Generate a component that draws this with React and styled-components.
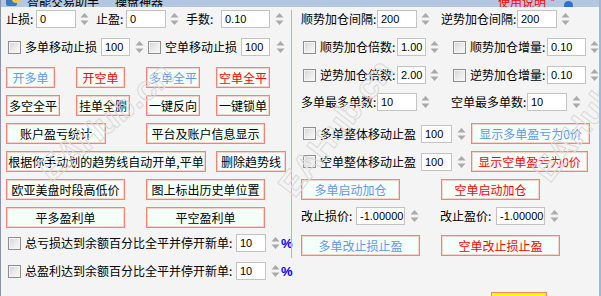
import React from "react";
import styled, { createGlobalStyle } from "styled-components";

const GlobalStyle = createGlobalStyle`
  html, body {
    margin: 0;
    padding: 0;
    background: #f5f5f5;
  }
`;

const tones = {
  blue: "#6495ed",
  red: "#ff0000",
  black: "#000000",
};

const Window = styled.div`
  position: relative;
  width: 601px;
  height: 296px;
  overflow: hidden;
  box-sizing: border-box;
  background: #f4f4f4;
  border-left: 1px solid #8796ab;
  border-right: 2px solid #9fb6de;
  font-family: "Noto Sans CJK SC", "Noto Sans", sans-serif;
  font-size: 12px;
  color: #000;
`;

const TitleBar = styled.div`
  height: 7px;
  background: #b4c7e0;
  display: flex;
  align-items: flex-end;
  overflow: hidden;
  padding-left: 4px;
`;

const TitleText = styled.span`
  font-size: 12px;
  line-height: 10px;
  margin-left: ${(p) => p.$ml || 0}px;
  color: ${(p) => p.$color || "#000"};
  white-space: nowrap;
`;

const Body = styled.div`
  display: flex;
  align-items: flex-start;
`;

const LeftPanel = styled.div`
  width: 290px;
  box-sizing: border-box;
  padding-left: 5px;
  display: flex;
  flex-direction: column;
`;

const Divider = styled.div`
  width: 1px;
  height: 248px;
  margin-top: 3px;
  background: #f0a67c;
`;

const RightPanel = styled.div`
  flex: 1;
  padding-left: 9px;
  display: flex;
  flex-direction: column;
`;

const Row = styled.div`
  display: flex;
  align-items: center;
  height: ${(p) => p.$h || 18}px;
  margin-top: ${(p) => p.$mt || 0}px;
`;

const Cell = styled.div`
  display: flex;
  align-items: center;
  flex-shrink: 0;
  width: ${(p) => p.$w}px;
  box-sizing: border-box;
`;

const Label = styled.span`
  flex-shrink: 0;
  white-space: nowrap;
  line-height: 1;
  width: ${(p) => (p.$w ? `${p.$w}px` : "auto")};
  margin-left: ${(p) => p.$ml || 0}px;
`;

const Field = styled.input`
  flex-shrink: 0;
  width: ${(p) => p.$w}px;
  height: 18px;
  margin: 0 0 0 ${(p) => p.$ml || 0}px;
  padding: 0 0 0 3px;
  box-sizing: border-box;
  border: 1px solid #c3c3c3;
  background: #fff;
  font-family: "Liberation Sans", Arial, sans-serif;
  font-size: 11px;
  color: #000;
  outline: none;
`;

const Check = styled.span`
  flex-shrink: 0;
  width: 13px;
  height: 13px;
  box-sizing: border-box;
  margin-left: ${(p) => p.$ml || 0}px;
  border: 1px solid #8e8f8f;
  background: linear-gradient(135deg, #d4d4d4 0%, #eeeeee 60%, #f8f8f8 100%);
  box-shadow: inset 0 0 0 1px #f4f4f4;
`;

const SpinBox = styled.svg`
  flex-shrink: 0;
  margin-left: ${(p) => p.$ml || 4}px;
`;

const Spin = ({ ml }) => (
  <SpinBox $ml={ml} width="9" height="14" viewBox="0 0 9 14">
    <path d="M4.5 1 L8.5 5.5 L0.5 5.5 Z" fill="#a9a9a9" />
    <path d="M0.5 8.5 L8.5 8.5 L4.5 13 Z" fill="#a9a9a9" />
  </SpinBox>
);

const Button = styled.button`
  flex-shrink: 0;
  width: ${(p) => p.$w}px;
  height: 21px;
  padding: 0;
  margin: 0;
  box-sizing: border-box;
  border: 1px solid #fa8072;
  box-shadow: inset 0 0 0 1px rgba(250, 128, 114, 0.35);
  background: #f5fffa;
  color: ${(p) => tones[p.$tone || "black"]};
  font-family: "Noto Sans CJK SC", sans-serif;
  font-size: 12px;
  white-space: nowrap;
  overflow: hidden;
  grid-column: ${(p) => p.$col || "auto"};
  justify-self: start;
`;

const ButtonGrid = styled.div`
  margin-top: 11px;
  display: grid;
  grid-template-columns: repeat(4, 70px);
  grid-auto-rows: 21px;
  row-gap: 7px;
`;

const Percent = styled.span`
  margin-left: 1px;
  color: #0000ff;
  font-family: "Liberation Sans", Arial, sans-serif;
  font-size: 13px;
  font-weight: bold;
`;

const YellowTab = styled.div`
  margin-top: 36px;
  margin-left: 190px;
  width: 54px;
  height: 10px;
  background: #ffff00;
  border: 1px solid #fa8072;
`;

const Watermark = styled.span`
  position: absolute;
  left: ${(p) => p.$x}px;
  top: ${(p) => p.$y}px;
  transform: rotate(${(p) => p.$r}deg);
  transform-origin: left bottom;
  font-family: "Liberation Sans", Arial, sans-serif;
  font-size: 34px;
  font-weight: bold;
  color: transparent;
  -webkit-text-stroke: 1px #dadada;
  pointer-events: none;
  white-space: nowrap;
`;

const TitleIcon = () => (
  <svg width="16" height="14" viewBox="0 0 16 14" style={{ flexShrink: 0 }}>
    <rect x="1" y="2" width="11" height="11" rx="2" fill="#3b78c8" />
    <circle cx="11" cy="6" r="4" fill="#f3c640" />
  </svg>
);

const InfoDot = styled.span`
  width: 9px;
  height: 9px;
  border-radius: 50%;
  background: #2f6fd6;
  margin-left: 8px;
  margin-bottom: -3px;
`;

const PctRow = ({ mt, text }) => (
  <Row $mt={mt}>
    <Check $ml={2} />
    <Label $ml={4} $w={211}>{text}</Label>
    <Field $w={30} value="10" readOnly />
    <Spin ml={5} />
    <Percent>%</Percent>
  </Row>
);

const CheckField = ({ cell, label, lw, value, fw, fml = 0, sml = 4, first }) => (
  <Cell $w={cell}>
    <Check $ml={first ? 2 : 0} />
    <Label $ml={4} $w={lw}>{label}</Label>
    <Field $w={fw} $ml={fml} value={value} readOnly />
    <Spin ml={sml} />
  </Cell>
);

const LabelField = ({ cell, label, lw, value, fw, sml = 4 }) => (
  <Cell $w={cell}>
    <Label $w={lw}>{label}</Label>
    <Field $w={fw} value={value} readOnly />
    <Spin ml={sml} />
  </Cell>
);

export default function App() {
  return (
    <>
      <GlobalStyle />
      <Window>
        <TitleBar>
          <TitleIcon />
          <TitleText $ml={6}>智能交易助手</TitleText>
          <TitleText $ml={16}>操盘神器</TitleText>
          <TitleText $ml={335} $color="#ff0000">使用说明</TitleText>
          <TitleText $ml={4} $color="#ff0000">*</TitleText>
          <InfoDot />
        </TitleBar>

        <Body>
          <LeftPanel>
            <Row $mt={3}>
              <LabelField cell={90} label="止损:" lw={30} value="0" fw={40} />
              <LabelField cell={90} label="止盈:" lw={30} value="0" fw={40} />
              <LabelField cell={100} label="手数:" lw={35} value="0.10" fw={49} sml={5} />
            </Row>

            <Row $mt={10}>
              <CheckField cell={142} first label="多单移动止损" lw={72} value="100" fw={29} fml={4} sml={5} />
              <CheckField cell={140} label="空单移动止损" lw={72} value="100" fw={29} fml={4} sml={6} />
            </Row>

            <ButtonGrid>
              <Button $w={49} $tone="blue">开多单</Button>
              <Button $w={49} $tone="red">开空单</Button>
              <Button $w={54} $tone="blue">多单全平</Button>
              <Button $w={54} $tone="red">空单全平</Button>

              <Button $w={54}>多空全平</Button>
              <Button $w={54}>挂单全删</Button>
              <Button $w={54}>一键反向</Button>
              <Button $w={54}>一键锁单</Button>

              <Button $w={100} $col="1 / span 2">账户盈亏统计</Button>
              <Button $w={119} $col="3 / span 2">平台及账户信息显示</Button>

              <Button $w={200} $col="1 / span 3">根据你手动划的趋势线自动开单,平单</Button>
              <Button $w={70} $col="4">删除趋势线</Button>

              <Button $w={119} $col="1 / span 2">欧亚美盘时段高低价</Button>
              <Button $w={119} $col="3 / span 2">图上标出历史单位置</Button>

              <Button $w={119} $col="1 / span 2">平多盈利单</Button>
              <Button $w={119} $col="3 / span 2">平空盈利单</Button>
            </ButtonGrid>

            <PctRow mt={6} text="总亏损达到余额百分比全平并停开新单:" />
            <PctRow mt={10} text="总盈利达到余额百分比全平并停开新单:" />
          </LeftPanel>

          <Divider />

          <RightPanel>
            <Row $mt={3}>
              <LabelField cell={140} label="顺势加仓间隔:" lw={76} value="200" fw={40} />
              <LabelField cell={140} label="逆势加仓间隔:" lw={76} value="200" fw={40} />
            </Row>

            <Row $mt={10}>
              <CheckField cell={152} first label="顺势加仓倍数:" lw={77} value="1.00" fw={29} />
              <CheckField cell={140} label="顺势加仓增量:" lw={77} value="0.10" fw={39} />
            </Row>

            <Row $mt={10}>
              <CheckField cell={152} first label="逆势加仓倍数:" lw={77} value="2.00" fw={29} />
              <CheckField cell={140} label="逆势加仓增量:" lw={77} value="0.10" fw={39} />
            </Row>

            <Row $mt={9}>
              <LabelField cell={150} label="多单最多单数:" lw={76} value="10" fw={40} />
              <LabelField cell={140} label="空单最多单数:" lw={76} value="10" fw={40} sml={5} />
            </Row>

            <Row $mt={12} $h={21}>
              <CheckField cell={170} first label="多单整体移动止盈" lw={97} value="100" fw={31} fml={4} sml={5} />
              <Button $w={119} $tone="blue">显示多单盈亏为0价</Button>
            </Row>

            <Row $mt={7} $h={21}>
              <CheckField cell={170} first label="空单整体移动止盈" lw={97} value="100" fw={31} fml={4} sml={5} />
              <Button $w={117} $tone="red">显示空单盈亏为0价</Button>
            </Row>

            <Row $mt={7} $h={21}>
              <Cell $w={140}>
                <Button $w={99} $tone="blue">多单启动加仓</Button>
              </Cell>
              <Button $w={99} $tone="red">空单启动加仓</Button>
            </Row>

            <Row $mt={7}>
              <LabelField cell={139} label="改止损价:" lw={55} value="-1.00000" fw={49} sml={5} />
              <LabelField cell={140} label="改止盈价:" lw={56} value="-1.00000" fw={49} sml={5} />
            </Row>

            <Row $mt={10} $h={21}>
              <Cell $w={140}>
                <Button $w={119} $tone="blue">多单改止损止盈</Button>
              </Cell>
              <Button $w={119} $tone="red">空单改止损止盈</Button>
            </Row>

            <YellowTab />
          </RightPanel>
        </Body>

        <Watermark $x={55} $y={150} $r={-40}>EAHub.cn</Watermark>
        <Watermark $x={300} $y={165} $r={-52}>EAHub.cn</Watermark>
        <Watermark $x={555} $y={150} $r={-52}>EAHub.cn</Watermark>
      </Window>
    </>
  );
}
